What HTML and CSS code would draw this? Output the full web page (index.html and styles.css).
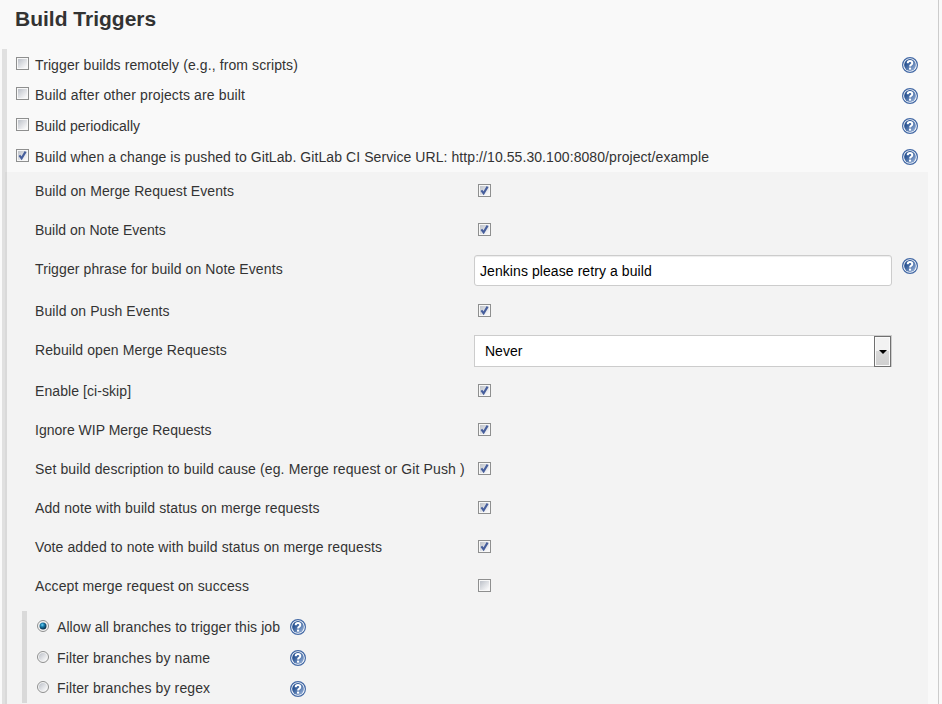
FILE: index.html
```html
<!DOCTYPE html>
<html lang="en">
<head>
<meta charset="utf-8">
<title>Build Triggers</title>
<link rel="stylesheet" href="styles.css">
</head>
<body>
<svg class="defs" aria-hidden="true">
  <defs>
    <linearGradient id="well" x1="0" y1="0" x2="1" y2="1"><stop offset="0.1" stop-color="#c3c7ce"/><stop offset="0.9" stop-color="#f8f8f9"/></linearGradient>
    <linearGradient id="blue" x1="0" y1="0" x2="1" y2="1"><stop offset="0.3" stop-color="#2b5594"/><stop offset="1" stop-color="#a3bbdf"/></linearGradient>
    <radialGradient id="dot" cx=".4" cy=".35" r=".65"><stop offset="0" stop-color="#6fd6fa"/><stop offset=".4" stop-color="#1b7fae"/><stop offset="1" stop-color="#0b2b44"/></radialGradient>
    <symbol id="off" viewBox="0 0 13 13"><rect x=".5" y=".5" width="12" height="12" fill="#f8f8f8" stroke="#8e8f8f"/><rect x="2" y="2" width="9" height="9" fill="url(#well)"/></symbol>
    <symbol id="on" viewBox="0 0 13 13"><use href="#off"/><path d="M3.4 6.3 5.6 9.3 9.6 2.6" fill="none" stroke="#465e9c" stroke-width="2.1"/></symbol>
    <symbol id="radio-off" viewBox="0 0 12 12"><circle cx="6" cy="6" r="5.5" fill="#f4f4f4" stroke="#8e8f8f"/><circle cx="6" cy="6" r="4" fill="url(#well)"/></symbol>
    <symbol id="radio-on" viewBox="0 0 12 12"><circle cx="6" cy="6" r="5.5" fill="#f4f4f4" stroke="#8e8f8f"/><circle cx="6" cy="6" r="3.5" fill="url(#dot)"/></symbol>
    <symbol id="help" viewBox="0 0 16 16"><circle cx="8" cy="8" r="7.4" fill="#fff" stroke="#4268a5" stroke-width="1.2"/><circle cx="8" cy="8" r="5.9" fill="url(#blue)"/><path d="M5.7 6.3Q5.7 4.1 8 4.1T10.3 6Q10.3 7.1 9 7.8Q8.1 8.3 8.1 9.6" fill="none" stroke="#fff" stroke-width="2"/><rect x="7" y="10.6" width="2.1" height="2" fill="#fff"/></symbol>
  </defs>
</svg>
<main class="page">
  <h1>Build Triggers</h1>
  <section class="triggers">
    <div class="trigger short"><svg class="box"><use href="#off"/></svg><span class="label wide">Trigger builds remotely (e.g., from scripts)</span><svg class="help"><use href="#help"/></svg></div>
    <div class="trigger"><svg class="box"><use href="#off"/></svg><span class="label wider">Build after other projects are built</span><svg class="help low"><use href="#help"/></svg></div>
    <div class="trigger"><svg class="box"><use href="#off"/></svg><span class="label">Build periodically</span><svg class="help"><use href="#help"/></svg></div>
    <div class="trigger"><svg class="box"><use href="#on"/></svg><span class="label mid">Build when a change is pushed to GitLab. GitLab CI Service URL: http://10.55.30.100:8080/project/example</span><svg class="help"><use href="#help"/></svg></div>
    <div class="options">
      <div class="option"><span class="name mid">Build on Merge Request Events</span><svg class="box"><use href="#on"/></svg></div>
      <div class="option"><span class="name">Build on Note Events</span><svg class="box"><use href="#on"/></svg></div>
      <div class="option phrase"><span class="name wide">Trigger phrase for build on Note Events</span><div class="input mid">Jenkins please retry a build</div><svg class="help"><use href="#help"/></svg></div>
      <div class="option"><span class="name mid">Build on Push Events</span><svg class="box"><use href="#on"/></svg></div>
      <div class="option rebuild"><span class="name wide">Rebuild open Merge Requests</span><div class="select"><span>Never</span><i class="arrow"></i></div></div>
      <div class="option"><span class="name mid">Enable [ci-skip]</span><svg class="box"><use href="#on"/></svg></div>
      <div class="option"><span class="name">Ignore WIP Merge Requests</span><svg class="box"><use href="#on"/></svg></div>
      <div class="option"><span class="name wider">Set build description to build cause (eg. Merge request or Git Push )</span><svg class="box"><use href="#on"/></svg></div>
      <div class="option"><span class="name wide">Add note with build status on merge requests</span><svg class="box"><use href="#on"/></svg></div>
      <div class="option"><span class="name wide">Vote added to note with build status on merge requests</span><svg class="box"><use href="#on"/></svg></div>
      <div class="option"><span class="name wide">Accept merge request on success</span><svg class="box"><use href="#off"/></svg></div>
      <div class="branches">
        <div class="branch"><svg class="radio"><use href="#radio-on"/></svg><span class="label mid">Allow all branches to trigger this job</span><svg class="help"><use href="#help"/></svg></div>
        <div class="branch short"><svg class="radio"><use href="#radio-off"/></svg><span class="label wider">Filter branches by name</span><svg class="help"><use href="#help"/></svg></div>
        <div class="branch"><svg class="radio"><use href="#radio-off"/></svg><span class="label wider">Filter branches by regex</span><svg class="help low"><use href="#help"/></svg></div>
      </div>
    </div>
  </section>
</main>
</body>
</html>
```
FILE: styles.css
```css
* { box-sizing: border-box; }
body {
  margin: 0;
  height: 704px;
  overflow: hidden;
  background: #f9f9f9;
  color: #333;
  font: 14px/16px "Liberation Sans", Arial, sans-serif;
}
svg { display: block; flex: none; }
.defs { position: absolute; width: 0; height: 0; }
.page {
  width: 939px;
  height: 704px;
  padding-left: 2px;
  border-right: 1px solid #ccc;
}
h1 {
  margin: 0;
  height: 49px;
  padding: 7px 0 0 13px;
  font-size: 21px;
  line-height: 24px;
}
.mid { letter-spacing: 0.075px; }
.wide { letter-spacing: 0.1px; }
.wider { letter-spacing: 0.128px; }
.triggers {
  width: 926px;
  height: 655px;
  border-left: 5px solid #e0e0e0;
}
.trigger {
  display: flex;
  height: 31px;
  padding: 8px 10px 0 9px;
}
.trigger.short, .branch.short { height: 30px; }
.box { width: 13px; height: 13px; }
.radio { width: 12px; height: 12px; margin: 1px 0 0 1px; }
.label { margin-left: 6px; white-space: nowrap; }
.help { width: 16px; height: 16px; margin-left: auto; }
.help.low { margin-top: 1px; }
.options {
  height: 532px;
  background: #f3f3f3;
  box-shadow: -2px 0 0 #d9d9d9;
}
.option {
  display: flex;
  height: 39px;
  padding: 12px 10px 0 28px;
}
.name { width: 443px; margin-top: -1px; flex: none; white-space: nowrap; }
.option.phrase { height: 42px; }
.option.rebuild { height: 41px; }
.input, .select {
  width: 418px;
  height: 31px;
  margin: -7px 0 0 -4px;
  border: 1px solid #ccc;
  background: #fff;
  color: #000;
}
.input {
  padding: 7px 5px;
  border-radius: 3px;
  box-shadow: inset 0 1px 1px rgba(0, 0, 0, 0.075);
}
.phrase .help { margin-top: -4px; }
.select {
  display: flex;
  height: 32px;
  padding-left: 10px;
  margin-top: -8px;
  justify-content: space-between;
  line-height: 31px;
}
.arrow {
  display: flex;
  align-items: center;
  justify-content: center;
  width: 17px;
  height: 31px;
  border: 1px solid #707070;
  box-shadow: inset 0 0 0 1px #fafafa;
  background: linear-gradient(#f2f2f2 0 50%, #d8d8d8 50%, #cfcfcf);
}
.arrow::before {
  content: "";
  border: 4px solid transparent;
  border-top-color: #000;
  border-bottom: 0;
}
.branches {
  width: 284px;
  height: 92px;
  margin: 5px 0 0 15px;
  border-left: 5px solid #d9d9d9;
}
.branch {
  display: flex;
  height: 31px;
  padding: 8px 0 0 9px;
}
.branch .label { margin-left: 8px; }
```
